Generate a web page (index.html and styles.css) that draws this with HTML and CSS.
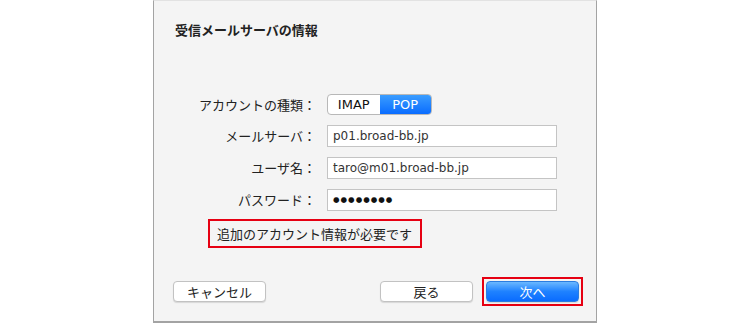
FILE: index.html
```html
<!DOCTYPE html>
<html lang="ja">

<head>
    <meta charset="UTF-8">
    <title>受信メールサーバの情報</title>
    <link rel="stylesheet" href="styles.css">
</head>

<body>
    <div class="panel">
        <h1 class="title">受信メールサーバの情報</h1>

        <div class="form">
            <div class="label">アカウントの種類：</div>
            <div class="segment">
                <span class="seg-item">IMAP</span>
                <span class="seg-item active">POP</span>
            </div>

            <div class="label">メールサーバ：</div>
            <div class="field">p01.broad-bb.jp</div>

            <div class="label">ユーザ名：</div>
            <div class="field">taro@m01.broad-bb.jp</div>

            <div class="label">パスワード：</div>
            <div class="field password">●●●●●●●●</div>
        </div>

        <div class="notice">追加のアカウント情報が必要です</div>

        <div class="footer">
            <button class="btn">キャンセル</button>
            <div class="footer-right">
                <button class="btn">戻る</button>
                <div class="highlight">
                    <button class="btn primary">次へ</button>
                </div>
            </div>
        </div>
    </div>
</body>

</html>
```

FILE: styles.css
```css
body {
    margin: 0;
    background-color: #fff;
    font-family: "Noto Sans CJK JP", "DejaVu Sans", sans-serif;
    color: #222;
}

.panel {
    box-sizing: border-box;
    margin-left: 153px;
    width: 444px;
    height: 323px;
    border: 1px solid #a3a3a3;
    border-top-color: #e2e2e2;
    border-bottom-width: 2px;
    background-color: #f4f4f4;
    padding: 0 13px 0 21px;
}

.title {
    margin: 21px 0 0;
    font-size: 13px;
    font-weight: bold;
    line-height: 16px;
}

.form {
    display: grid;
    grid-template-columns: 141px 230px;
    column-gap: 11px;
    row-gap: 10px;
    margin-top: 56px;
    align-items: center;
}

.label {
    text-align: right;
    font-size: 13px;
    line-height: 16px;
}

.segment {
    display: flex;
    width: 105px;
    height: 21px;
    box-sizing: border-box;
    border: 1px solid #b8b8b8;
    border-radius: 4px;
    overflow: hidden;
    background-color: #fff;
}

.seg-item {
    flex: 1;
    text-align: center;
    font-family: "DejaVu Sans", sans-serif;
    font-size: 13px;
    line-height: 19px;
    color: #111;
}

.seg-item.active {
    background: linear-gradient(#3a9dff, #0a6cff);
    color: #fff;
}

.field {
    box-sizing: border-box;
    height: 22px;
    border: 1px solid #c4c4c4;
    background-color: #fff;
    padding-left: 5px;
    font-family: "DejaVu Sans", sans-serif;
    font-size: 12px;
    line-height: 20px;
    color: #333;
}

.field.password {
    font-size: 7.5px;
    letter-spacing: 1px;
    color: #111;
}

.notice {
    display: inline-block;
    margin: 8px 0 0 33px;
    width: 214px;
    height: 29px;
    box-sizing: border-box;
    border: 2px solid #e60012;
    padding-left: 7px;
    font-size: 13px;
    line-height: 25px;
}

.footer {
    display: flex;
    justify-content: space-between;
    align-items: center;
    margin: 29px 0 0 -2px;
}

.footer-right {
    display: flex;
    align-items: center;
    gap: 9px;
}

.btn {
    box-sizing: border-box;
    width: 93px;
    height: 21px;
    border: 1px solid #c2c2c2;
    border-radius: 4px;
    background: #fff;
    box-shadow: 0 1px 1px rgba(0, 0, 0, 0.12);
    font-family: "Noto Sans CJK JP", sans-serif;
    font-size: 13px;
    line-height: 17px;
    color: #222;
    padding: 0;
}

.btn.primary {
    border-color: #2b7de0;
    background: linear-gradient(#6ab8ff, #1f82ff 50%, #0a6cff);
    color: #fff;
}

.highlight {
    border: 2px solid #e60012;
    padding: 2px;
    line-height: 0;
}
```
